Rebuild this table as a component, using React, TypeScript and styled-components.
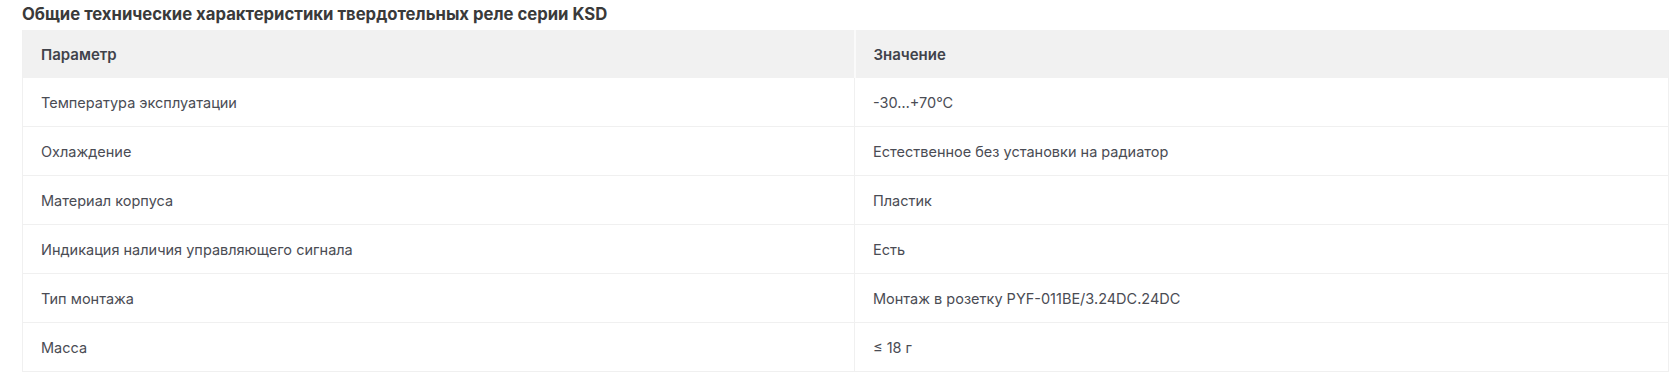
import React from 'react';
import styled, {createGlobalStyle} from 'styled-components'

interface SpecRow{
    param:string;
    value:string;
}

const specs:SpecRow[] = [
    {param:"Температура эксплуатации", value:"-30…+70°C"},
    {param:"Охлаждение", value:"Естественное без установки на радиатор"},
    {param:"Материал корпуса", value:"Пластик"},
    {param:"Индикация наличия управляющего сигнала", value:"Есть"},
    {param:"Тип монтажа", value:"Монтаж в розетку PYF-011BE/3.24DC.24DC"},
    {param:"Масса", value:"≤ 18 г"},
]

const App = () => {
    return (
    <>
        <GlobalStyle/>
        <SpecsSection>
            <SpecsTitle>Общие технические характеристики твердотельных реле серии KSD</SpecsTitle>
            <SpecsTable>
                <colgroup>
                    <col style={{width:"832px"}}/>
                    <col/>
                </colgroup>
                <thead>
                    <tr>
                        <HeadCell>Параметр</HeadCell>
                        <HeadCell>Значение</HeadCell>
                    </tr>
                </thead>
                <tbody>
                    {specs.map((row)=>(
                        <BodyRow key={row.param}>
                            <BodyCell>{row.param}</BodyCell>
                            <BodyCell>{row.value}</BodyCell>
                        </BodyRow>
                    ))}
                </tbody>
            </SpecsTable>
        </SpecsSection>
    </>
    )
}

const GlobalStyle = createGlobalStyle`
    body{
        margin:0;
        background:#fff;
        font-family:Inter, "Noto Sans", sans-serif;
    }
`

const SpecsSection = styled.div`
    padding:5px 11px 0 22px;
`

const SpecsTitle = styled.h3`
    margin:0 0 7px 0;
    font-size:16.7px;
    line-height:18px;
    font-weight:700;
    color:#3a3a3a;
`

const SpecsTable = styled.table`
    width:100%;
    border-collapse:collapse;
    table-layout:fixed;
    border:1px solid #f0f0f0;
    border-top:none;
`

const HeadCell = styled.th`
    height:48px;
    padding:0 18px;
    text-align:left;
    background:#f1f1f1;
    font-size:15px;
    font-weight:600;
    color:#40424a;
    & + &{
        border-left:2px solid #fafafa;
    }
`

const BodyRow = styled.tr`
    border-bottom:1px solid #f0f0f0;
`

const BodyCell = styled.td`
    height:48px;
    padding:0 18px;
    font-size:14.5px;
    color:#4a4c54;
    & + &{
        border-left:1px solid #f0f0f0;
    }
`

export default App
